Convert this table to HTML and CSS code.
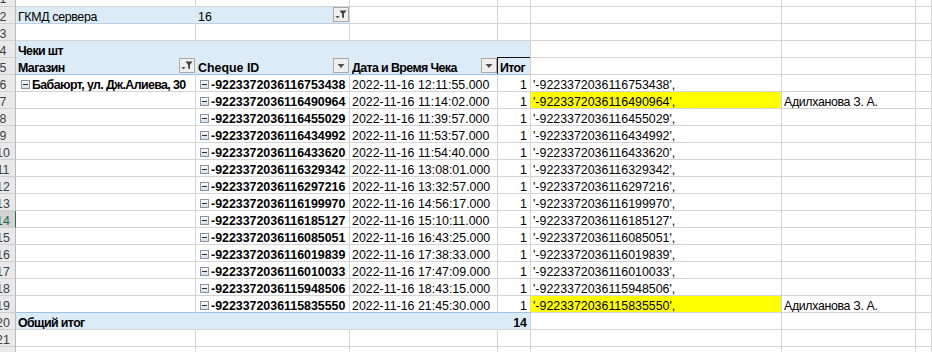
FILE: index.html
```html
<!DOCTYPE html>
<html lang="ru">
<head>
<meta charset="utf-8">
<title>Чеки</title>
<link rel="stylesheet" href="styles.css">
</head>
<body>
<div class="sheet">
  <!-- row 1 -->
  <div class="c rh first"><span>1</span></div><div class="c"></div><div class="c"></div><div class="c"></div><div class="c"></div><div class="c"></div><div class="c"></div><div class="c"></div>
  <!-- row 2 -->
  <div class="c rh"><span>2</span></div>
  <div class="c page cy">ГКМД сервера</div>
  <div class="c page page-end hb"><span class="lbl">16</span><span class="btn"><svg width="14" height="13" viewBox="0 0 14 13"><path d="M1.5 8h4l-2 2.4z" fill="#505050"/><path d="M5.5 2.5h7l-2.6 3.2v4.6l-1.8-1.1v-3.5z" fill="#404040"/></svg></span></div>
  <div class="c"></div><div class="c"></div><div class="c"></div><div class="c"></div><div class="c"></div>
  <!-- row 3 -->
  <div class="c rh"><span>3</span></div><div class="c"></div><div class="c"></div><div class="c"></div><div class="c"></div><div class="c"></div><div class="c"></div><div class="c"></div>
  <!-- row 4 -->
  <div class="c rh"><span>4</span></div>
  <div class="c pv b cyb">Чеки шт</div><div class="c pv"></div><div class="c pv"></div><div class="c pv pv-end"></div>
  <div class="c"></div><div class="c"></div><div class="c"></div>
  <!-- row 5 -->
  <div class="c rh"><span>5</span></div>
  <div class="c pv hd b hb"><span class="lbl cyb">Магазин</span><span class="btn"><svg width="14" height="13" viewBox="0 0 14 13"><path d="M1.5 8h4l-2 2.4z" fill="#505050"/><path d="M5.5 2.5h7l-2.6 3.2v4.6l-1.8-1.1v-3.5z" fill="#404040"/></svg></span></div>
  <div class="c pv hd b hb"><span class="lbl">Cheque ID</span><span class="btn"><svg width="14" height="13" viewBox="0 0 14 13"><path d="M3.5 5h7l-3.5 4z" fill="#505050"/></svg></span></div>
  <div class="c pv hd b hb"><span class="lbl cyb">Дата и Время Чека</span><span class="btn"><svg width="14" height="13" viewBox="0 0 14 13"><path d="M3.5 5h7l-3.5 4z" fill="#505050"/></svg></span></div>
  <div class="c pv hd b pv-end sel cyb">Итог</div>
  <div class="c"></div><div class="c"></div><div class="c"></div>
  <!-- row 6 -->
  <div class="c rh"><span>6</span></div>
  <div class="c b"><span class="mb mb-a"></span><span class="cyb">Бабаюрт, ул. Дж.Алиева, 30</span></div>
  <div class="c b"><span class="mb"></span>-9223372036116753438</div>
  <div class="c">2022-11-16 12:11:55.000</div>
  <div class="c r">1</div>
  <div class="c">'-9223372036116753438',</div><div class="c"></div><div class="c"></div>
  <!-- row 7 -->
  <div class="c rh"><span>7</span></div>
  <div class="c"></div>
  <div class="c b"><span class="mb"></span>-9223372036116490964</div>
  <div class="c">2022-11-16 11:14:02.000</div>
  <div class="c r">1</div>
  <div class="c y">'-9223372036116490964',</div><div class="c cy">Адилханова З. А.</div><div class="c"></div>
  <!-- row 8 -->
  <div class="c rh"><span>8</span></div>
  <div class="c"></div>
  <div class="c b"><span class="mb"></span>-9223372036116455029</div>
  <div class="c">2022-11-16 11:39:57.000</div>
  <div class="c r">1</div>
  <div class="c">'-9223372036116455029',</div><div class="c"></div><div class="c"></div>
  <!-- row 9 -->
  <div class="c rh"><span>9</span></div>
  <div class="c"></div>
  <div class="c b"><span class="mb"></span>-9223372036116434992</div>
  <div class="c">2022-11-16 11:53:57.000</div>
  <div class="c r">1</div>
  <div class="c">'-9223372036116434992',</div><div class="c"></div><div class="c"></div>
  <!-- row 10 -->
  <div class="c rh"><span>10</span></div>
  <div class="c"></div>
  <div class="c b"><span class="mb"></span>-9223372036116433620</div>
  <div class="c">2022-11-16 11:54:40.000</div>
  <div class="c r">1</div>
  <div class="c">'-9223372036116433620',</div><div class="c"></div><div class="c"></div>
  <!-- row 11 -->
  <div class="c rh"><span>11</span></div>
  <div class="c"></div>
  <div class="c b"><span class="mb"></span>-9223372036116329342</div>
  <div class="c">2022-11-16 13:08:01.000</div>
  <div class="c r">1</div>
  <div class="c">'-9223372036116329342',</div><div class="c"></div><div class="c"></div>
  <!-- row 12 -->
  <div class="c rh"><span>12</span></div>
  <div class="c"></div>
  <div class="c b"><span class="mb"></span>-9223372036116297216</div>
  <div class="c">2022-11-16 13:32:57.000</div>
  <div class="c r">1</div>
  <div class="c">'-9223372036116297216',</div><div class="c"></div><div class="c"></div>
  <!-- row 13 -->
  <div class="c rh"><span>13</span></div>
  <div class="c"></div>
  <div class="c b"><span class="mb"></span>-9223372036116199970</div>
  <div class="c">2022-11-16 14:56:17.000</div>
  <div class="c r">1</div>
  <div class="c">'-9223372036116199970',</div><div class="c"></div><div class="c"></div>
  <!-- row 14 -->
  <div class="c rh active"><span>14</span></div>
  <div class="c"></div>
  <div class="c b"><span class="mb"></span>-9223372036116185127</div>
  <div class="c">2022-11-16 15:10:11.000</div>
  <div class="c r">1</div>
  <div class="c">'-9223372036116185127',</div><div class="c"></div><div class="c"></div>
  <!-- row 15 -->
  <div class="c rh"><span>15</span></div>
  <div class="c"></div>
  <div class="c b"><span class="mb"></span>-9223372036116085051</div>
  <div class="c">2022-11-16 16:43:25.000</div>
  <div class="c r">1</div>
  <div class="c">'-9223372036116085051',</div><div class="c"></div><div class="c"></div>
  <!-- row 16 -->
  <div class="c rh"><span>16</span></div>
  <div class="c"></div>
  <div class="c b"><span class="mb"></span>-9223372036116019839</div>
  <div class="c">2022-11-16 17:38:33.000</div>
  <div class="c r">1</div>
  <div class="c">'-9223372036116019839',</div><div class="c"></div><div class="c"></div>
  <!-- row 17 -->
  <div class="c rh"><span>17</span></div>
  <div class="c"></div>
  <div class="c b"><span class="mb"></span>-9223372036116010033</div>
  <div class="c">2022-11-16 17:47:09.000</div>
  <div class="c r">1</div>
  <div class="c">'-9223372036116010033',</div><div class="c"></div><div class="c"></div>
  <!-- row 18 -->
  <div class="c rh"><span>18</span></div>
  <div class="c"></div>
  <div class="c b"><span class="mb"></span>-9223372036115948506</div>
  <div class="c">2022-11-16 18:43:15.000</div>
  <div class="c r">1</div>
  <div class="c">'-9223372036115948506',</div><div class="c"></div><div class="c"></div>
  <!-- row 19 -->
  <div class="c rh"><span>19</span></div>
  <div class="c tl"></div>
  <div class="c b tl"><span class="mb"></span>-9223372036115835550</div>
  <div class="c tl">2022-11-16 21:45:30.000</div>
  <div class="c r tl">1</div>
  <div class="c y">'-9223372036115835550',</div><div class="c cy">Адилханова З. А.</div><div class="c"></div>
  <!-- row 20 -->
  <div class="c rh"><span>20</span></div>
  <div class="c tot b cyb">Общий итог</div><div class="c tot"></div><div class="c tot"></div><div class="c tot tot-end b r">14</div>
  <div class="c"></div><div class="c"></div><div class="c"></div>
  <!-- row 21 -->
  <div class="c rh"><span>21</span></div><div class="c"></div><div class="c"></div><div class="c"></div><div class="c"></div><div class="c"></div><div class="c"></div><div class="c"></div>
  <!-- row 22 -->
  <div class="c rh"><span>22</span></div><div class="c"></div><div class="c"></div><div class="c"></div><div class="c"></div><div class="c"></div><div class="c"></div><div class="c"></div>
</div>
</body>
</html>
```
FILE: styles.css
```css
html, body {
  margin: 0;
  padding: 0;
  background: #ffffff;
}

body {
  width: 932px;
  height: 352px;
  overflow: hidden;
}

.sheet {
  display: grid;
  grid-template-columns: 16px 180px 154px 148px 33px 251px 134px 1fr;
  grid-template-rows: 7px;
  grid-auto-rows: 17px;
  height: 352px;
  overflow: hidden;
  font-family: "Liberation Sans", Arial, sans-serif;
  font-size: 12.4px;
  color: #000;
}

.c {
  box-sizing: border-box;
  min-width: 0;
  border-right: 1px solid #d4d4d4;
  border-bottom: 1px solid #d4d4d4;
  padding: 3px 2px 0;
  line-height: 14px;
  white-space: nowrap;
  overflow: hidden;
}

.b { font-weight: bold; }
.r { text-align: right; padding-right: 3px; }

.cy { letter-spacing: -0.35px; }
.cyb { letter-spacing: -0.6px; }

/* row headers */
.rh {
  background: #e9e9e9;
  border-bottom-color: #cfcfcf;
  border-right-color: #b9b9b9;
  color: #3f3f3f;
  padding: 3px 0 0;
}
.rh span {
  display: block;
  width: 30px;
  margin-left: -12px;
  text-align: center;
}
.rh.first {
  padding-top: 0;
  display: flex;
  align-items: flex-end;
}
.rh.first span { flex: none; }
.rh.active {
  background: #d3d3d3;
  color: #1e6b3f;
  border-right-color: #217346;
}

/* page field (row 2) */
.page {
  background: #ddebf7;
  border-right-color: #ddebf7;
  border-bottom-color: #bccfe3;
}
.page.page-end { border-right-color: #d4d4d4; }

/* pivot header rows */
.pv {
  background: #ddebf7;
  border-right-color: #ddebf7;
  border-bottom-color: #ddebf7;
}
.pv.hd { border-bottom-color: #9bc2e6; }
.pv.pv-end { border-right-color: #d4d4d4; }

.hb {
  display: flex;
  align-items: flex-start;
  padding-top: 0;
  padding-right: 0;
}
.hb .lbl {
  padding-top: 3px;
  flex: 1;
  min-width: 0;
  overflow: hidden;
}

.btn {
  flex: none;
  box-sizing: border-box;
  width: 16px;
  height: 15px;
  border: 1px solid #a9a9a9;
  background: #efefef;
  display: flex;
}
.btn svg { display: block; }

.sel {
  border-right-color: #111;
  border-bottom-color: #111;
  box-shadow: -1px -1px 0 0 #111;
}

/* expand/collapse box */
.mb {
  display: inline-block;
  position: relative;
  box-sizing: border-box;
  width: 9px;
  height: 9px;
  margin: 0 2px 0 2px;
  border: 1px solid #8593a3;
  background: linear-gradient(#fbfcfd, #d6dee8);
  vertical-align: 0;
}
.mb::after {
  content: "";
  position: absolute;
  left: 1px;
  right: 1px;
  top: 3px;
  height: 1px;
  background: #2b2b2b;
}
.mb.mb-a { margin-left: 3px; }

.y { background: #ffff00; }

.tl { border-bottom-color: #9bc2e6; }

.tot {
  background: #ddebf7;
  border-right-color: #ddebf7;
}
.tot.tot-end { border-right-color: #d4d4d4; }
```
